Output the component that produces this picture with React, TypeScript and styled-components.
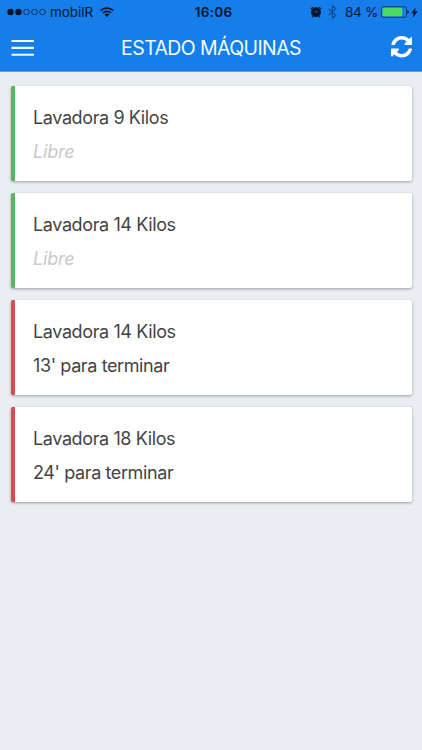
import React from "react";
import styled, { createGlobalStyle } from "styled-components";

const Global = createGlobalStyle`
  * { box-sizing: border-box; }
  body { margin: 0; background: #eaeef2; font-family: Inter, "Liberation Sans", sans-serif; }
`;
const Screen = styled.div`
  width: 422px;
  height: 750px;
  overflow: hidden;
  background: #eaeef2;
`;
const Header = styled.header`
  height: 72px;
  background: #157eeb;
  border-bottom: 1px solid #5a9fe6;
`;
const StatusBar = styled.div`
  height: 24px;
  display: grid;
  grid-template-columns: 1fr auto 1fr;
  align-items: center;
  padding: 0 4px 0 7px;
  color: #06152d;
  font-size: 13.5px;
  line-height: 24px;
`;
const Group = styled.div<{ $end?: boolean }>`
  display: flex;
  align-items: center;
  justify-content: ${(p) => (p.$end ? "flex-end" : "flex-start")};
  svg { display: block; flex: none; }
`;
const Carrier = styled.span`
  margin: 0 7px 0 4px;
  letter-spacing: -0.05px;
`;
const Clock = styled.span`
  padding-left: 2px;
  font-weight: 600;
  letter-spacing: 0.3px;
`;
const Percent = styled.span`
  margin: 0 3px 0 8px;
  letter-spacing: -0.3px;
`;
const StatusIcons = styled.span`
  display: flex;
  align-items: center;
  gap: 6px;
`;
const Power = styled.span`
  display: flex;
  align-items: center;
  gap: 2px;
`;
const NavBar = styled.div`
  height: 47px;
  display: grid;
  grid-template-columns: 60px 1fr 60px;
  align-items: center;
`;
const IconButton = styled.button<{ $end?: boolean }>`
  height: 47px;
  padding: ${(p) => (p.$end ? "0 10px 2px 0" : "0 0 0 11px")};
  border: 0;
  background: none;
  display: flex;
  align-items: center;
  justify-content: ${(p) => (p.$end ? "flex-end" : "flex-start")};
`;
const Title = styled.h1`
  margin: 0;
  padding-top: 1px;
  text-align: center;
  color: #f4fbff;
  font-size: 19.5px;
  font-weight: 400;
  letter-spacing: -0.6px;
  line-height: 47px;
  white-space: nowrap;
`;
const List = styled.main`
  display: flex;
  flex-direction: column;
  gap: 12.2px;
  padding: 13.5px 10.5px 0 11px;
`;
const Card = styled.article<{ $busy: boolean }>`
  height: 95px;
  padding: 15px 18px;
  border-left: 4px solid ${(p) => (p.$busy ? "#d0504d" : "#5bb560")};
  border-radius: 2px;
  background: #fff;
  box-shadow: 0 1px 3px rgba(0, 0, 0, 0.35);
`;
const Line = styled.p<{ $free?: boolean }>`
  margin: 0;
  height: 34px;
  line-height: 34px;
  font-size: 18px;
  letter-spacing: ${(p) => (p.$free ? "-0.2px" : "-0.39px")};
  color: ${(p) => (p.$free ? "#c9c9c9" : "#444")};
  font-style: ${(p) => (p.$free ? "italic" : "normal")};
`;

const machines = [
  { name: "Lavadora 9 Kilos", remaining: 0 },
  { name: "Lavadora 14 Kilos", remaining: 0 },
  { name: "Lavadora 14 Kilos", remaining: 13 },
  { name: "Lavadora 18 Kilos", remaining: 24 },
];

const Signal = () => (
  <svg width="39" height="8" viewBox="0 0 39 8">
    {[0, 1, 2, 3, 4].map((i) => (
      <circle key={i} cx={3.5 + i * 8} cy="4" r={i < 2 ? 3.2 : 2.8} fill={i < 2 ? "#06152d" : "none"} stroke="#06152d" strokeWidth={i < 2 ? 0 : 0.7} />
    ))}
  </svg>
);
const Wifi = () => (
  <svg width="14" height="10" viewBox="0 0 14 10" fill="none" stroke="#06152d" strokeWidth="1.7">
    <path d="M.6 3.7a9.2 9.2 0 0 1 12.8 0M2.9 6a5.9 5.9 0 0 1 8.2 0" />
    <path d="M7 10 4.5 7.6a3.6 3.6 0 0 1 5 0Z" fill="#06152d" stroke="none" />
  </svg>
);
const Alarm = () => (
  <svg width="12" height="12" viewBox="0 0 12 12">
    <circle cx="6" cy="6.3" r="5" fill="#06152d" />
    <path d="M1 3 3 1.1M9 1.1 11 3M2.8 10.4l-.8 1M9.2 10.4l.8 1" stroke="#06152d" strokeWidth="1.3" />
    <path d="M4.3 4.6 6 6.4l1.9-1.2" fill="none" stroke="#4a86c8" strokeWidth=".7" />
  </svg>
);
const Bluetooth = () => (
  <svg width="9" height="14" viewBox="0 0 9 14" fill="none" stroke="#0d478d" strokeWidth="1.1">
    <path d="m.6 3.8 7.2 6.4-3.4 3V.8l3.4 3L.6 10.2" />
  </svg>
);
const Battery = () => (
  <svg width="28" height="12" viewBox="0 0 28 12">
    <rect x=".5" y=".7" width="25" height="10.6" rx="2" fill="none" stroke="#0b3c7c" />
    <rect x="1.5" y="1.7" width="19.7" height="8.6" rx="1" fill="#4cd964" />
    <path d="M26.4 4.2q1.5.3 1.5 1.8t-1.5 1.8Z" fill="#06152d" />
  </svg>
);
const Bolt = () => (
  <svg width="7" height="11" viewBox="0 0 7 11">
    <path d="M4.8.3.2 6.2h2.6l-1 4.6 5-6.5H4Z" fill="#06152d" />
  </svg>
);
const Menu = () => (
  <svg width="24" height="18" viewBox="0 0 24 18" stroke="#eefaff" strokeWidth="2.1">
    <path d="M.5 2h22.5M.5 8.9h22.5M.5 15.8h22.5" />
  </svg>
);
const Refresh = () => (
  <svg width="21.5" height="21.5" viewBox="0 0 1536 1536" fill="#fff">
    <path d="M1511 928q0 5-1 7-64 268-268 434.5T764 1536q-146 0-282.5-55T238 1324l-129 129q-19 19-45 19t-45-19-19-45V960q0-26 19-45t45-19h448q26 0 45 19t19 45-19 45l-137 137q71 66 161 102t187 36q134 0 250-65t186-179q11-17 53-117 8-23 30-23h192q13 0 22.5 9.5t9.5 22.5zm25-800v448q0 26-19 45t-45 19h-448q-26 0-45-19t-19-45 19-45l138-138Q969 256 768 256q-134 0-250 65T332 500q-11 17-53 117-8 23-30 23H50q-13 0-22.5-9.5T18 608v-7q65-268 270-434.5T768 0q146 0 284 55.5T1297 212l130-129q19-19 45-19t45 19 19 45z" />
  </svg>
);

export default function App() {
  return (
    <Screen>
      <Global />
      <Header>
        <StatusBar>
          <Group><Signal /><Carrier>mobilR</Carrier><Wifi /></Group>
          <Clock>16:06</Clock>
          <Group $end>
            <StatusIcons><Alarm /><Bluetooth /></StatusIcons>
            <Percent>84 %</Percent>
            <Power><Battery /><Bolt /></Power>
          </Group>
        </StatusBar>
        <NavBar>
          <IconButton aria-label="Menú"><Menu /></IconButton>
          <Title>ESTADO MÁQUINAS</Title>
          <IconButton $end aria-label="Actualizar"><Refresh /></IconButton>
        </NavBar>
      </Header>
      <List>
        {machines.map((m, i) => (
          <Card key={i} $busy={m.remaining > 0}>
            <Line>{m.name}</Line>
            <Line $free={m.remaining === 0}>{m.remaining ? `${m.remaining}' para terminar` : "Libre"}</Line>
          </Card>
        ))}
      </List>
    </Screen>
  );
}
